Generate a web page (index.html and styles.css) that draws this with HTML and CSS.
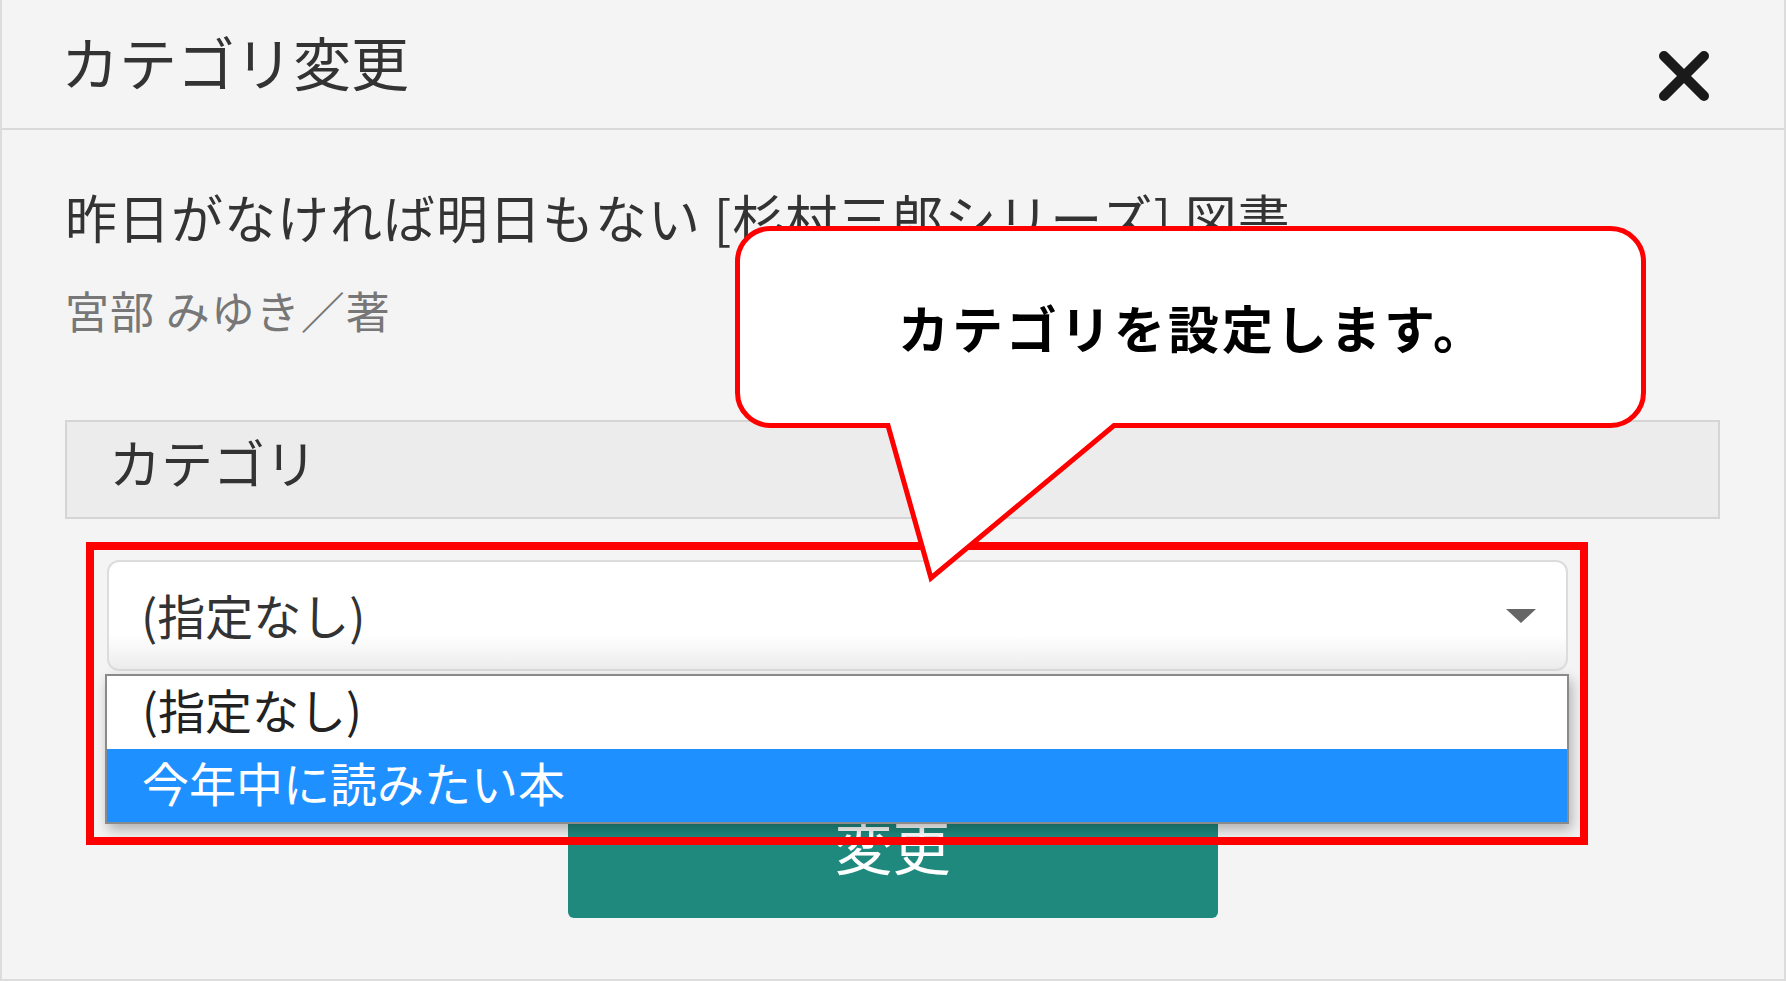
FILE: index.html
```html
<!DOCTYPE html>
<html lang="ja">

<head>
    <meta charset="UTF-8">
    <meta name="viewport" content="width=device-width, initial-scale=1.0">
    <title>カテゴリ変更</title>
    <link rel="stylesheet" href="styles.css">
</head>

<body>
    <div class="modal">
        <div class="modal-header">
            <h4 class="modal-title">カテゴリ変更</h4>
            <button class="close" aria-label="閉じる">
                <svg width="52" height="52" viewBox="0 0 52 52">
                    <path d="M6 6 L46 46 M46 6 L6 46" stroke="#1a1a1a" stroke-width="10" stroke-linecap="round" fill="none"/>
                </svg>
            </button>
        </div>

        <div class="modal-body">
            <p class="book-title">昨日がなければ明日もない [杉村三郎シリーズ] 図書</p>
            <p class="book-author">宮部 みゆき／著</p>

            <div class="field-label">カテゴリ</div>

            <div class="select-wrap">
                <div class="select">
                    <span>(指定なし)</span>
                    <span class="caret"></span>
                </div>
                <ul class="options">
                    <li>(指定なし)</li>
                    <li class="active">今年中に読みたい本</li>
                </ul>
            </div>

            <div class="actions">
                <button class="btn-submit">変更</button>
            </div>
        </div>

        <!-- annotation overlays -->
        <div class="highlight"></div>
        <div class="callout">
            <svg class="callout-shape" width="911" height="360" viewBox="0 0 911 360">
                <path d="M35.5 2.5 H875.5 A33 33 0 0 1 908.5 35.5 V166.5 A33 33 0 0 1 875.5 199.5 H379 L196 352 L153 199.5 H35.5 A33 33 0 0 1 2.5 166.5 V35.5 A33 33 0 0 1 35.5 2.5 Z"
                      fill="#fff" stroke="#ff0000" stroke-width="5"/>
            </svg>
            <p class="callout-text">カテゴリを設定します。</p>
        </div>
    </div>
</body>

</html>
```

FILE: styles.css
```css
body {
    margin: 0;
    padding: 0;
    background-color: #fff;
    font-family: "Noto Sans CJK JP", "Noto Sans", sans-serif;
    color: #333;
}

.modal {
    position: relative;
    width: 1786px;
    height: 981px;
    box-sizing: border-box;
    background-color: #f4f4f4;
    border: 2px solid #dcdcdc;
    border-top: none;
    overflow: hidden;
}

.modal-header {
    display: flex;
    justify-content: space-between;
    align-items: flex-start;
    height: 130px;
    box-sizing: border-box;
    padding: 25px 74px 0 59px;
    border-bottom: 2px solid #d9d9d9;
}

.modal-title {
    margin: 0;
    font-size: 58px;
    line-height: 72px;
    font-weight: 400;
    color: #333;
}

.close {
    margin-top: 25px;
    padding: 0;
    border: none;
    background: none;
    width: 52px;
    height: 52px;
    cursor: pointer;
}

.close svg {
    display: block;
}

.modal-body {
    padding: 0 64px 0 63px;
}

.book-title {
    margin: 51px 0 0;
    font-size: 52px;
    line-height: 72px;
    letter-spacing: 1px;
    white-space: nowrap;
}

.book-author {
    margin: 27px 0 0;
    font-size: 44px;
    line-height: 60px;
    letter-spacing: 1px;
    color: #777;
}

.field-label {
    margin-top: 80px;
    padding: 10px 42px 25px;
    font-size: 52px;
    line-height: 60px;
    background-color: #ececec;
    border: 2px solid #d5d5d5;
}

.select-wrap {
    position: relative;
    margin-top: 41px;
    margin-left: 42px;
    width: 1461px;
}

.select {
    display: flex;
    justify-content: space-between;
    align-items: center;
    height: 111px;
    box-sizing: border-box;
    padding: 0 30px 4px 32px;
    font-size: 48px;
    color: #333;
    background: linear-gradient(#fff 68%, #ececec);
    border: 2px solid #dcdcdc;
    border-radius: 12px;
}

.caret {
    width: 0;
    height: 0;
    margin-top: 4px;
    border-left: 15px solid transparent;
    border-right: 15px solid transparent;
    border-top: 14px solid #666;
}

.options {
    position: absolute;
    top: 114px;
    left: -2px;
    width: 1464px;
    box-sizing: border-box;
    margin: 0;
    padding: 0;
    list-style: none;
    background-color: #fff;
    border: 2px solid #8a8a8a;
    box-shadow: 3px 6px 12px rgba(0, 0, 0, 0.28);
    z-index: 2;
}

.options li {
    height: 73px;
    padding-left: 35px;
    font-size: 47px;
    line-height: 66px;
    color: #222;
}

.options li.active {
    background-color: #1e90ff;
    color: #fff;
}

.actions {
    margin-top: 126px;
}

.btn-submit {
    display: block;
    margin: 0 auto;
    width: 650px;
    height: 121px;
    padding: 0 0 25px;
    font-family: inherit;
    font-size: 58px;
    line-height: 96px;
    color: #fff;
    background-color: #1f897e;
    border: none;
    border-radius: 6px;
}

.highlight {
    position: absolute;
    left: 84px;
    top: 542px;
    width: 1502px;
    height: 303px;
    box-sizing: border-box;
    border: 8px solid #ff0000;
    z-index: 3;
}

.callout {
    position: absolute;
    left: 733px;
    top: 226px;
    width: 911px;
    height: 202px;
    display: flex;
    align-items: center;
    justify-content: center;
    z-index: 4;
}

.callout-shape {
    position: absolute;
    left: 0;
    top: 0;
    overflow: visible;
}

.callout-text {
    position: relative;
    margin: 0 0 0 4px;
    font-size: 51px;
    font-weight: 700;
    letter-spacing: 3px;
    line-height: 60px;
    color: #000;
}
```
